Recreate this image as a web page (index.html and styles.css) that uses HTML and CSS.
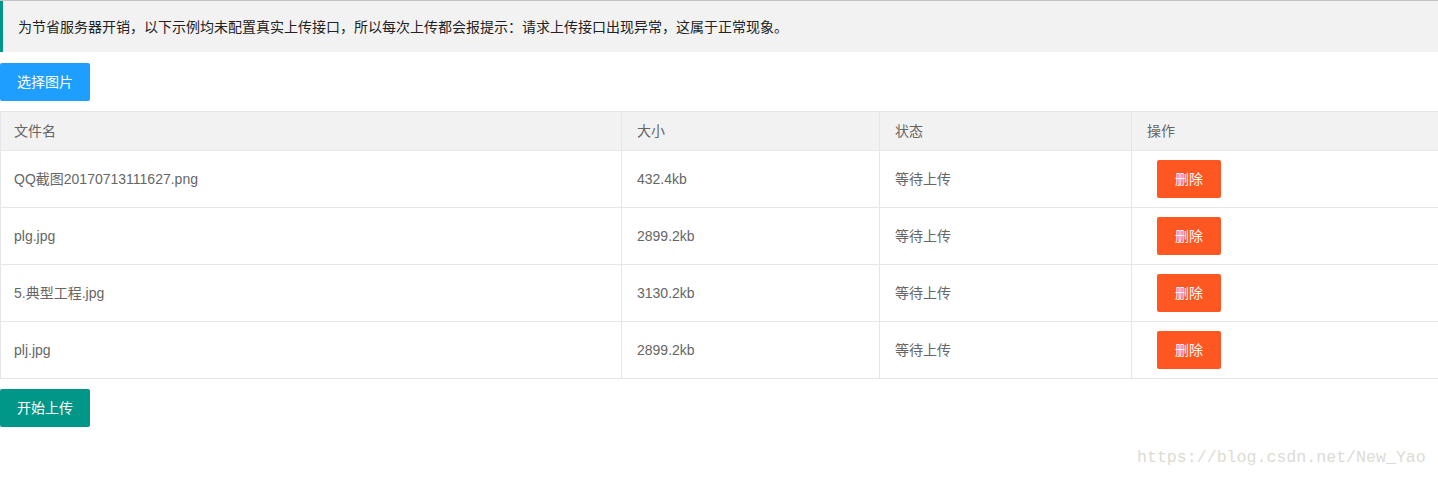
FILE: index.html
```html
<!DOCTYPE html>
<html lang="zh-CN">
<head>
<meta charset="utf-8">
<title>上传</title>
<link rel="stylesheet" href="styles.css">
</head>
<body>
<div class="page">
  <blockquote class="quote">为节省服务器开销，以下示例均未配置真实上传接口，所以每次上传都会报提示：请求上传接口出现异常，这属于正常现象。</blockquote>
  <button class="btn btn-normal">选择图片</button>
  <table class="tbl">
    <colgroup>
      <col class="c1"><col class="c2"><col class="c3"><col class="c4">
    </colgroup>
    <thead>
      <tr><th>文件名</th><th>大小</th><th>状态</th><th>操作</th></tr>
    </thead>
    <tbody>
      <tr><td>QQ截图20170713111627.png</td><td>432.4kb</td><td>等待上传</td><td><button class="btn btn-danger btn-del">删除</button></td></tr>
      <tr><td>plg.jpg</td><td>2899.2kb</td><td>等待上传</td><td><button class="btn btn-danger btn-del">删除</button></td></tr>
      <tr><td>5.典型工程.jpg</td><td>3130.2kb</td><td>等待上传</td><td><button class="btn btn-danger btn-del">删除</button></td></tr>
      <tr><td>plj.jpg</td><td>2899.2kb</td><td>等待上传</td><td><button class="btn btn-danger btn-del">删除</button></td></tr>
    </tbody>
  </table>
  <button class="btn btn-primary">开始上传</button>
</div>
<div class="watermark">https://blog.csdn.net/New_Yao</div>
</body>
</html>
```

FILE: styles.css
```css
html, body {
  margin: 0;
  padding: 0;
  background: #fff;
}
body {
  font-family: "Liberation Sans", "Noto Sans CJK SC", sans-serif;
  font-size: 14px;
  color: #333;
  border-top: 1px solid #c4c4c4;
  height: 476px;
  position: relative;
  overflow: hidden;
}
.page {
  display: flex;
  flex-direction: column;
  align-items: flex-start;
}
.quote {
  margin: 0 0 11px 0;
  padding: 15px 15px 14px 15px;
  line-height: 22px;
  border-left: 3px solid #009688;
  background: #f2f2f2;
  color: #222;
  font-size: 14px;
  align-self: stretch;
  height: 22px;
}
.btn {
  display: inline-block;
  height: 38px;
  line-height: 38px;
  padding: 0 17px;
  border: none;
  border-radius: 2px;
  color: #fff;
  font-family: inherit;
  font-size: 14px;
  cursor: pointer;
  white-space: nowrap;
}
.btn-normal { background: #1e9fff; }
.btn-primary { background: #009688; margin-top: 10px; }
.btn-danger { background: #ff5722; }
.btn-del { margin-left: 10px; padding: 0 18px; }
.tbl {
  width: 1438px;
  border-collapse: collapse;
  table-layout: fixed;
  margin-top: 10px;
  color: #666;
}
.c1 { width: 621px; }
.c2 { width: 258px; }
.c3 { width: 252px; }
.c4 { width: 307px; }
.tbl th, .tbl td {
  border: 1px solid #e6e6e6;
  padding: 9px 15px;
  line-height: 20px;
  text-align: left;
  font-weight: normal;
  font-size: 14px;
}
.tbl th:first-child, .tbl td:first-child { padding-left: 13px; }
.tbl thead tr { background: #f2f2f2; }
.tbl td { height: 38px; }
.tbl td .btn { vertical-align: middle; }
.watermark {
  position: absolute;
  left: 1137px;
  top: 447px;
  font-family: "Liberation Mono", monospace;
  font-size: 16.6px;
  color: #dcdcd4;
}
```
